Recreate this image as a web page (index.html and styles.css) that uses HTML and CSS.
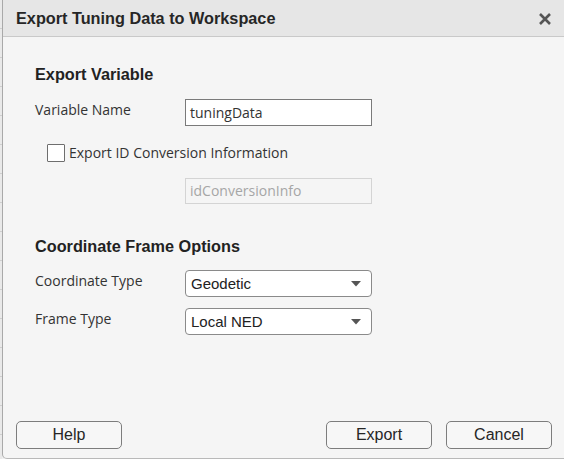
FILE: index.html
```html
<!DOCTYPE html>
<html>
<head>
<meta charset="utf-8">
<link rel="stylesheet" href="styles.css">
</head>
<body>
<div class="page">
  <div class="strip"></div>
  <div class="dialog">
    <div class="titlebar">
      <span class="title">Export Tuning Data to Workspace</span>
      <svg class="close" width="14" height="14" viewBox="0 0 14 14"><path d="M2 2 L12 12 M12 2 L2 12" stroke="#555" stroke-width="2.6" stroke-linecap="butt"/></svg>
    </div>
    <div class="content">
      <div class="heading h1">Export Variable</div>
      <div class="row r1">
        <span class="label">Variable Name</span>
        <div class="field">tuningData</div>
      </div>
      <div class="check-row">
        <span class="box"></span>
        <span class="label">Export ID Conversion Information</span>
      </div>
      <div class="row r3">
        <span class="label"></span>
        <div class="field disabled">idConversionInfo</div>
      </div>
      <div class="heading h2">Coordinate Frame Options</div>
      <div class="row r4">
        <span class="label">Coordinate Type</span>
        <div class="select"><span>Geodetic</span><svg width="10" height="6" viewBox="0 0 10 6"><path d="M0 0 H10 L5 5.5 Z" fill="#555"/></svg></div>
      </div>
      <div class="row r5">
        <span class="label">Frame Type</span>
        <div class="select"><span>Local NED</span><svg width="10" height="6" viewBox="0 0 10 6"><path d="M0 0 H10 L5 5.5 Z" fill="#555"/></svg></div>
      </div>
    </div>
    <div class="footer">
      <button class="btn">Help</button>
      <div class="spacer"></div>
      <button class="btn">Export</button>
      <button class="btn">Cancel</button>
    </div>
  </div>
</div>
</body>
</html>
```
FILE: styles.css
```css
html, body {
  margin: 0;
  padding: 0;
  width: 564px;
  height: 459px;
  overflow: hidden;
  background: #f0f0f0;
}
.page {
  display: flex;
  width: 564px;
  height: 459px;
}
.strip {
  width: 2px;
  flex: none;
  background: repeating-linear-gradient(to bottom, #e9e9e9 0, #e9e9e9 28px, #cfcfcf 28px, #cfcfcf 29px);
}
.dialog {
  flex: 1;
  display: flex;
  flex-direction: column;
  background: #f5f5f5;
  border-left: 1px solid #a9a9a9;
  border-bottom: 1px solid #b9b9b9;
  border-bottom-left-radius: 5px;
  height: 458px;
  overflow: hidden;
}
.titlebar {
  height: 36px;
  flex: none;
  background: #e6e6e6;
  border-bottom: 1px solid #c9c9c9;
  display: flex;
  align-items: center;
  padding: 0 12px 0 13px;
}
.title {
  font-family: "Liberation Sans", Arial, sans-serif;
  font-weight: bold;
  font-size: 16.25px;
  color: #262626;
  flex: 1;
}
.close {
  flex: none;
  margin-top: 1px;
}
.content {
  flex: 1;
  padding: 27px 0 0 32px;
  font-family: "Open Sans", "Noto Sans", sans-serif;
  font-size: 14px;
  color: #333;
}
.heading {
  font-family: "Liberation Sans", Arial, sans-serif;
  font-weight: bold;
  font-size: 16.25px;
  line-height: 20px;
  color: #222;
}
.row {
  display: flex;
  align-items: flex-start;
}
.row .label {
  width: 150px;
  flex: none;
  line-height: 20px;
}
.r1 { margin-top: 15px; }
.r1 .label { margin-top: 1px; }
.field {
  border: 1px solid #7a7a7a;
  background: #fff;
  line-height: 25px;
  padding-left: 4px;
  box-sizing: border-box;
  width: 187px;
  height: 27px;
}
.field.disabled {
  border-color: #d4d4d4;
  background: #f5f5f5;
  color: #a6a6a6;
  height: 26px;
  line-height: 24px;
}
.check-row {
  display: flex;
  align-items: center;
  margin-top: 17px;
  margin-left: 12px;
}
.box {
  width: 16px;
  height: 16px;
  border: 1px solid #6e6e6e;
  background: #fff;
  border-radius: 1px;
  margin-right: 4px;
}
.r3 { margin-top: 16px; }
.h2 { margin-top: 32px; }
.r4 { margin-top: 14px; }
.r5 { margin-top: 11px; }
.r4 .label, .r5 .label { margin-top: 1px; }
.select {
  width: 187px;
  height: 27px;
  box-sizing: border-box;
  border: 1px solid #8a8a8a;
  border-radius: 4px;
  background: #fff;
  display: flex;
  align-items: center;
  justify-content: space-between;
  padding: 0 10px 0 5px;
  font-family: "Liberation Sans", Arial, sans-serif;
  font-size: 15px;
  color: #222;
}
.footer {
  flex: none;
  display: flex;
  gap: 14px;
  padding: 0 12px 9px 13px;
}
.spacer { flex: 1; }
.btn {
  width: 106px;
  height: 28px;
  box-sizing: border-box;
  border: 1px solid #7d7d7d;
  border-radius: 5px;
  background: #f7f7f7;
  font-family: "Liberation Sans", Arial, sans-serif;
  font-size: 16px;
  color: #262626;
  padding: 0;
}
```
